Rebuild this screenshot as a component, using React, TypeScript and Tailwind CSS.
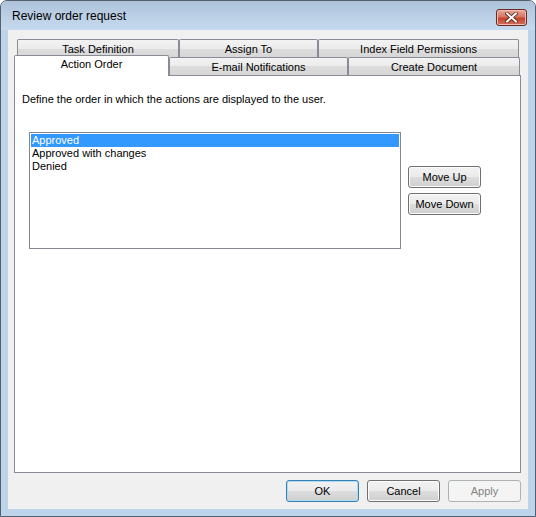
import React from "react";

const ui = { fontFamily: '"Liberation Sans", Arial, sans-serif' };

function Tab({
  label,
  width,
  height,
  selected,
}: {
  label: string;
  width: number;
  height: number;
  selected?: boolean;
}) {
  return (
    <div
      className={
        "flex shrink-0 items-center justify-center border border-b-0 border-[#898c95] text-[11px] leading-[13px] text-black rounded-t-[2px] " +
        (selected
          ? "relative z-10 -mb-px bg-white pb-[3px]"
          : "bg-[linear-gradient(#f3f3f3,#ebebeb_50%,#dddddd_50%,#d6d6d6)] pt-[1px]")
      }
      style={{ width, height }}
    >
      {label}
    </div>
  );
}

function WinButton({
  children,
  variant = "normal",
}: {
  children: React.ReactNode;
  variant?: "normal" | "default" | "disabled";
}) {
  const cls =
    variant === "default"
      ? "border-[#3c7fb1] bg-[linear-gradient(#f2f2f2,#ebebeb_50%,#dddddd_50%,#cfcfcf)] shadow-[inset_0_0_0_1px_#a9dcf7] text-black"
      : variant === "disabled"
      ? "border-[#adb2b5] bg-[#f4f4f4] text-[#838383]"
      : "border-[#707070] bg-[linear-gradient(#f2f2f2,#ebebeb_50%,#dddddd_50%,#cfcfcf)] shadow-[inset_0_0_0_1px_#fcfcfc] text-black";
  return (
    <div
      className={
        "flex h-[22px] w-[73px] shrink-0 items-center justify-center rounded-[3px] border text-[11px] leading-[13px] " +
        cls
      }
    >
      {children}
    </div>
  );
}

export default function App() {
  const items = ["Approved", "Approved with changes", "Denied"];

  return (
    <div
      className="flex h-[517px] w-[536px] flex-col overflow-hidden rounded-t-[7px] border border-[#52606f] bg-[#bcd3ea]"
      style={ui}
    >
      {/* title bar */}
      <div className="flex h-[29px] shrink-0 items-center justify-between bg-[linear-gradient(#aec3da,#c6daef)] pl-[11px] pr-[8px]">
        <span className="pt-[1px] text-[12px] text-black">Review order request</span>
        <div className="mt-[4px] flex h-[17px] w-[31px] items-center justify-center rounded-[3px] border border-[#6e2a22] bg-[linear-gradient(#e9a99b,#d47663_45%,#c2442f_55%,#d3705d)] shadow-[inset_0_0_0_1px_#eebcb0]">
          <svg width="13" height="11" viewBox="0 0 13 11">
            <path
              d="M2 1.5 L11 9.5 M11 1.5 L2 9.5"
              stroke="#5a1b12"
              strokeWidth="3.6"
              strokeLinecap="square"
            />
            <path
              d="M2 1.5 L11 9.5 M11 1.5 L2 9.5"
              stroke="#ffffff"
              strokeWidth="2"
              strokeLinecap="square"
            />
          </svg>
        </div>
      </div>

      {/* client area */}
      <div className="mx-[7px] flex h-[479px] flex-col bg-[#f0f0f0] pl-[6px] pr-[7px] pt-[9px]">
        {/* tab rows */}
        <div className="ml-[3px] flex h-[18px]">
          <Tab label="Task Definition" width={162} height={19} />
          <Tab label="Assign To" width={139} height={19} />
          <Tab label="Index Field Permissions" width={201} height={19} />
        </div>
        <div className="-mt-[2px] flex h-[20px] items-end">
          <Tab label="Action Order" width={155} height={21} selected />
          <Tab label="E-mail Notifications" width={179} height={18} />
          <Tab label="Create Document" width={172} height={18} />
        </div>

        {/* tab page */}
        <div className="flex h-[398px] w-[507px] flex-col border border-[#898c95] bg-white pl-[7px] pt-[17px]">
          <p className="text-[11px] leading-[13px] text-black">
            Define the order in which the actions are displayed to the user.
          </p>
          <div className="mt-[26px] flex pl-[7px]">
            <div className="h-[117px] w-[372px] border border-[#828790] bg-white p-px">
              {items.map((item, i) => (
                <div
                  key={item}
                  className={
                    "h-[13px] pl-[1px] text-[11px] leading-[13px] " +
                    (i === 0 ? "bg-[#3399ff] text-white" : "text-black")
                  }
                >
                  {item}
                </div>
              ))}
            </div>
            <div className="ml-[7px] mt-[34px] flex flex-col gap-[5px]">
              <WinButton>Move Up</WinButton>
              <WinButton>Move Down</WinButton>
            </div>
          </div>
        </div>

        {/* dialog buttons */}
        <div className="mt-[7px] flex justify-end gap-[8px]">
          <WinButton variant="default">OK</WinButton>
          <WinButton>Cancel</WinButton>
          <WinButton variant="disabled">Apply</WinButton>
        </div>
      </div>
    </div>
  );
}
